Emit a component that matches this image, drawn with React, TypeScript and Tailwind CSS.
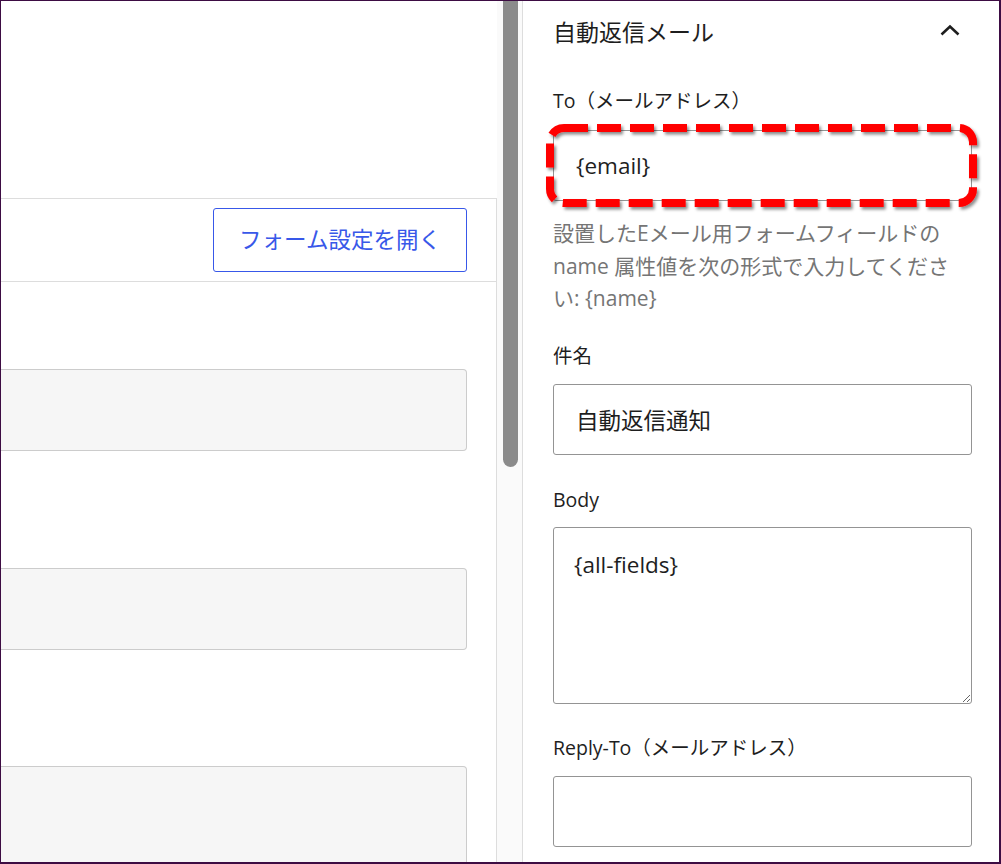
import React from "react";

const FONT = '"Open Sans", "Noto Sans CJK JP", sans-serif';

const FieldLabel = ({ children, className = "" }: { children: React.ReactNode; className?: string }) => (
  <div className={`h-[28px] leading-[28px] text-[19.5px] text-[#1e1e1e] whitespace-nowrap ${className}`}>
    {children}
  </div>
);

const TextInput = ({ value = "" }: { value?: string }) => (
  <input
    type="text"
    defaultValue={value}
    className="w-full h-[71px] border border-[#949494] rounded-[3px] bg-white pl-[22px] text-[22.5px] text-[#1e1e1e] outline-none"
  />
);

// hand-drawn style highlight round the "To" field
const Highlight = () => (
  <svg
    className="absolute left-[-10px] top-[-10px] pointer-events-none"
    width={440}
    height={95}
    viewBox="0 0 440 95"
  >
    <defs>
      <filter id="hl-shadow" x="-5%" y="-20%" width="110%" height="140%">
        <feDropShadow dx="2" dy="2.5" stdDeviation="1.5" floodColor="#000" floodOpacity="0.45" />
      </filter>
    </defs>
    <rect
      x={7}
      y={8}
      width={423}
      height={75}
      rx={14}
      fill="none"
      stroke="#ff0000"
      strokeWidth={8}
      strokeDasharray="24 9"
      filter="url(#hl-shadow)"
    />
  </svg>
);

const LeftPane = () => (
  <div className="w-[496px] shrink-0 flex flex-col">
    <div className="h-[197px] shrink-0" />
    <div className="flex-1 border-t border-r border-[#dddddd] flex flex-col">
      <div className="h-[83px] shrink-0 border-b border-[#dddddd] flex items-center justify-end pr-[29px]">
        <button className="w-[254px] h-[64px] border border-[#3858e9] rounded-[3px] bg-white text-[#3858e9] text-[22.5px] leading-none">
          フォーム設定を開く
        </button>
      </div>
      <div className="mt-[87px] w-[466px] h-[82px] shrink-0 border border-l-0 border-[#cccccc] rounded-r-[4px] bg-[#f6f6f6]" />
      <div className="mt-[117px] w-[466px] h-[82px] shrink-0 border border-l-0 border-[#cccccc] rounded-r-[4px] bg-[#f6f6f6]" />
      <div className="mt-[116px] w-[466px] h-[120px] shrink-0 border border-l-0 border-[#cccccc] rounded-r-[4px] bg-[#f6f6f6]" />
    </div>
  </div>
);

const ScrollTrack = () => (
  <div className="w-[25px] shrink-0 bg-[#fafafa] pl-[6px]">
    <div className="w-[15px] h-[466px] bg-[#8b8b8b] rounded-b-full" />
  </div>
);

const SettingsPanel = () => (
  <div className="flex-1 border-l border-[#dddddd] pl-[30px] pr-[27px] flex flex-col">
    <div className="h-[62px] shrink-0 flex items-center justify-between">
      <span className="text-[23px] leading-none text-[#1e1e1e]">自動返信メール</span>
      <svg width={20} height={12} viewBox="0 0 20 12" className="mr-[12px] mt-[-4px]">
        <polyline points="1.5,10.5 10,2.5 18.5,10.5" fill="none" stroke="#1e1e1e" strokeWidth={2.6} />
      </svg>
    </div>

    <FieldLabel className="mt-[24px]">To（メールアドレス）</FieldLabel>
    <div className="relative mt-[15px]">
      <TextInput value="{email}" />
      <Highlight />
    </div>
    <p className="mt-[16px] text-[21px] leading-[32.5px] text-[#757575] whitespace-nowrap">
      設置したEメール用フォームフィールドの
      <br />
      name 属性値を次の形式で入力してくださ
      <br />
      い: {"{name}"}
    </p>

    <FieldLabel className="mt-[27px]">件名</FieldLabel>
    <div className="mt-[14px]">
      <TextInput value="自動返信通知" />
    </div>

    <FieldLabel className="mt-[31px]">Body</FieldLabel>
    <textarea
      defaultValue="{all-fields}"
      className="mt-[13px] w-full h-[177px] shrink-0 border border-[#949494] rounded-[3px] bg-white pl-[20px] pt-[21px] text-[22.5px] leading-[32px] text-[#1e1e1e] outline-none"
    />

    <FieldLabel className="mt-[30px]">Reply-To（メールアドレス）</FieldLabel>
    <div className="mt-[14px]">
      <TextInput />
    </div>
  </div>
);

export default function App() {
  return (
    <div
      className="w-[1001px] h-[864px] overflow-hidden bg-white border-t border-l border-r-2 border-b-2 border-[#3d0c43] flex"
      style={{ fontFamily: FONT }}
    >
      <LeftPane />
      <ScrollTrack />
      <SettingsPanel />
    </div>
  );
}
